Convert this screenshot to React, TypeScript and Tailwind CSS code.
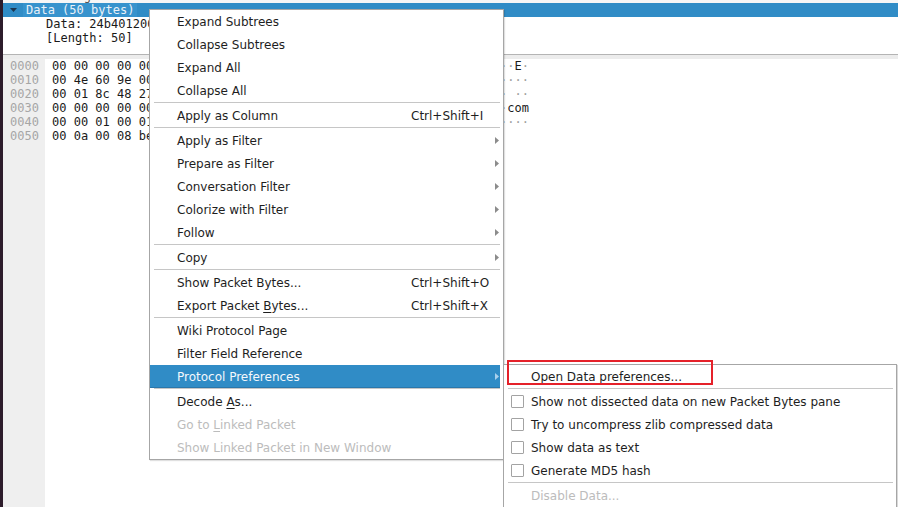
import React from "react";

type MenuItem =
  | "sep"
  | {
      label: React.ReactNode;
      shortcut?: string;
      sub?: boolean;
      disabled?: boolean;
      active?: boolean;
    };

const mainItems: MenuItem[] = [
  { label: "Expand Subtrees" },
  { label: "Collapse Subtrees" },
  { label: "Expand All" },
  { label: "Collapse All" },
  "sep",
  { label: "Apply as Column", shortcut: "Ctrl+Shift+I" },
  "sep",
  { label: "Apply as Filter", sub: true },
  { label: "Prepare as Filter", sub: true },
  { label: "Conversation Filter", sub: true },
  { label: "Colorize with Filter", sub: true },
  { label: "Follow", sub: true },
  "sep",
  { label: "Copy", sub: true },
  "sep",
  { label: "Show Packet Bytes...", shortcut: "Ctrl+Shift+O" },
  {
    label: (
      <>
        Export Packet <span className="underline underline-offset-2">B</span>ytes...
      </>
    ),
    shortcut: "Ctrl+Shift+X",
  },
  "sep",
  { label: "Wiki Protocol Page" },
  { label: "Filter Field Reference" },
  { label: "Protocol Preferences", sub: true, active: true },
  "sep",
  {
    label: (
      <>
        Decode <span className="underline underline-offset-2">A</span>s...
      </>
    ),
  },
  {
    label: (
      <>
        Go to <span className="underline underline-offset-2">L</span>inked Packet
      </>
    ),
    disabled: true,
  },
  { label: "Show Linked Packet in New Window", disabled: true },
];

const subItems: { label: string; check?: boolean; disabled?: boolean; sepAfter?: boolean }[] = [
  { label: "Open Data preferences...", sepAfter: true },
  { label: "Show not dissected data on new Packet Bytes pane", check: true },
  { label: "Try to uncompress zlib compressed data", check: true },
  { label: "Show data as text", check: true },
  { label: "Generate MD5 hash", check: true, sepAfter: true },
  { label: "Disable Data...", disabled: true },
];

const hexRows: { off: string; hex: string; ascii: string }[] = [
  {
    off: "0000",
    hex: "00 00 00 00 00 00 00 00  00 00 00 00 08 00 45 00",
    ascii: "········ ······E·",
  },
  {
    off: "0010",
    hex: "00 4e 60 9e 00 00 80 11  00 00 c0 a8 01 64 c0 a8",
    ascii: "·N`····· ········",
  },
  {
    off: "0020",
    hex: "00 01 8c 48 27 11 00 3a  fa 6a 24 b4 01 20 00 01",
    ascii: "···H'··: ·j$·· ··",
  },
  {
    off: "0030",
    hex: "00 00 00 00 00 00 05 74  65 73 74 31 03 63 6f 6d",
    ascii: "·······t est1·com",
  },
  {
    off: "0040",
    hex: "00 00 01 00 01 00 00 29  10 00 00 00 00 00 00 00",
    ascii: "·······) ········",
  },
  {
    off: "0050",
    hex: "00 0a 00 08 be 6f 12 9a  5c 3e                  ",
    ascii: "·····o·· \\>",
  },
];

function AsciiText({ s }: { s: string }) {
  return (
    <>
      {Array.from(s).map((c, i) =>
        c === "·" ? (
          <span key={i} className="text-[#a0a0a0]">
            ·
          </span>
        ) : (
          <span key={i}>{c}</span>
        )
      )}
    </>
  );
}

function SubArrow({ light }: { light?: boolean }) {
  return (
    <svg width="4" height="7" viewBox="0 0 4 7" className="shrink-0">
      <polygon points="0,0 4,3.5 0,7" fill={light ? "#a9d0ec" : "#8c8c8c"} />
    </svg>
  );
}

export default function App() {
  return (
    <div className="relative w-[898px] h-[507px] overflow-hidden bg-white flex font-['DejaVu_Sans',sans-serif]">
      {/* window edge */}
      <div className="w-[3px] h-full bg-[#2d1c2b] shrink-0" />

      <div className="flex-1 flex flex-col min-w-0">
        {/* packet details tree */}
        <div className="h-[54px] shrink-0 flex flex-col font-['DejaVu_Sans_Mono',monospace] text-[12px] leading-[14px] text-[#1a1a1a] whitespace-pre">
          <div className="h-[3px] overflow-hidden bg-[#f6f6f6]">
            <div className="-mt-[11px] h-[14px] pl-[23px] text-[#555]">Rendering</div>
          </div>
          <div className="h-[14px] flex items-center bg-[#308cc6]">
            <svg width="7" height="4" viewBox="0 0 7 4" className="ml-[7px] shrink-0">
              <polygon points="0,0 7,0 3.5,4" fill="#1b3650" />
            </svg>
            <div className="ml-[6px] h-[14px] pl-[3px] pr-[3px] bg-[#3793cd] text-[#e9f1f8]">
              Data (50 bytes)
            </div>
          </div>
          <div className="h-[14px] pl-[43px]">
            Data: 24b401200001000000000000057465737431036
          </div>
          <div className="h-[14px] pl-[43px]">[Length: 50]</div>
        </div>

        {/* splitter */}
        <div className="h-[1px] bg-[#b4b4b4] shrink-0" />
        <div className="h-[4px] bg-[#ececec] shrink-0" />

        {/* bytes pane */}
        <div className="flex-1 flex font-['DejaVu_Sans_Mono',monospace] text-[12px] leading-[14px] whitespace-pre">
          <div className="w-[42px] shrink-0 bg-[#efefef] pl-[7px] text-[#a6a6a6]">
            {hexRows.map((r) => (
              <div key={r.off} className="h-[14px]">
                {r.off}
              </div>
            ))}
          </div>
          <div className="pl-[7px] text-[#1a1a1a]">
            {hexRows.map((r) => (
              <div key={r.off} className="h-[14px]">
                {r.hex + " "}
                <AsciiText s={r.ascii} />
              </div>
            ))}
          </div>
        </div>
      </div>

      {/* context menu */}
      <div className="absolute left-[149px] top-[9px] w-[355px] bg-white border border-[#a6a6a6] shadow-[1px_1px_1px_rgba(0,0,0,0.12)] text-[12px] leading-[14px] text-[#1e1e1e]">
        {mainItems.map((it, i) =>
          it === "sep" ? (
            <div key={i} className="h-[2px] flex flex-col pl-[4px] pr-[3px]">
              <div className="h-[1px] bg-[#c6c6c6]" />
            </div>
          ) : (
            <div
              key={i}
              className={
                "h-[23px] mr-[3px] flex items-center pl-[27px] pr-[1px] whitespace-nowrap " +
                (it.active
                  ? "bg-[#308cc6] text-[#f4f8fc] shadow-[inset_0_-1px_0_#2a77ab]"
                  : it.disabled
                  ? "text-[#bcbcbc]"
                  : "")
              }
            >
              <div className="w-[234px] shrink-0">{it.label}</div>
              <div className="flex-1">{it.shortcut ?? ""}</div>
              {it.sub ? <SubArrow light={it.active} /> : null}
            </div>
          )
        )}
      </div>

      {/* submenu */}
      <div className="absolute left-[503px] top-[364px] w-[394px] bg-white border border-[#a6a6a6] shadow-[1px_1px_1px_rgba(0,0,0,0.15)] text-[12px] leading-[14px] text-[#1e1e1e]">
        {subItems.map((it, i) => (
          <React.Fragment key={i}>
            <div
              className={
                "h-[23px] flex items-center whitespace-nowrap " +
                (it.check ? "pl-[7px]" : "pl-[27px]") +
                (it.disabled ? " text-[#bcbcbc]" : "")
              }
            >
              {it.check ? (
                <div className="w-[13px] h-[13px] border border-[#a3a3a3] bg-white rounded-[1px] mr-[7px] shrink-0" />
              ) : null}
              <span>{it.label}</span>
            </div>
            {it.sepAfter ? (
              <div className="h-[2px] flex flex-col pl-[4px] pr-[3px]">
                <div className="h-[1px] bg-[#c6c6c6]" />
              </div>
            ) : null}
          </React.Fragment>
        ))}
      </div>

      {/* annotation */}
      <div className="absolute left-[507px] top-[360px] w-[206px] h-[25px] border-2 border-[#e5212a] pointer-events-none" />
    </div>
  );
}
